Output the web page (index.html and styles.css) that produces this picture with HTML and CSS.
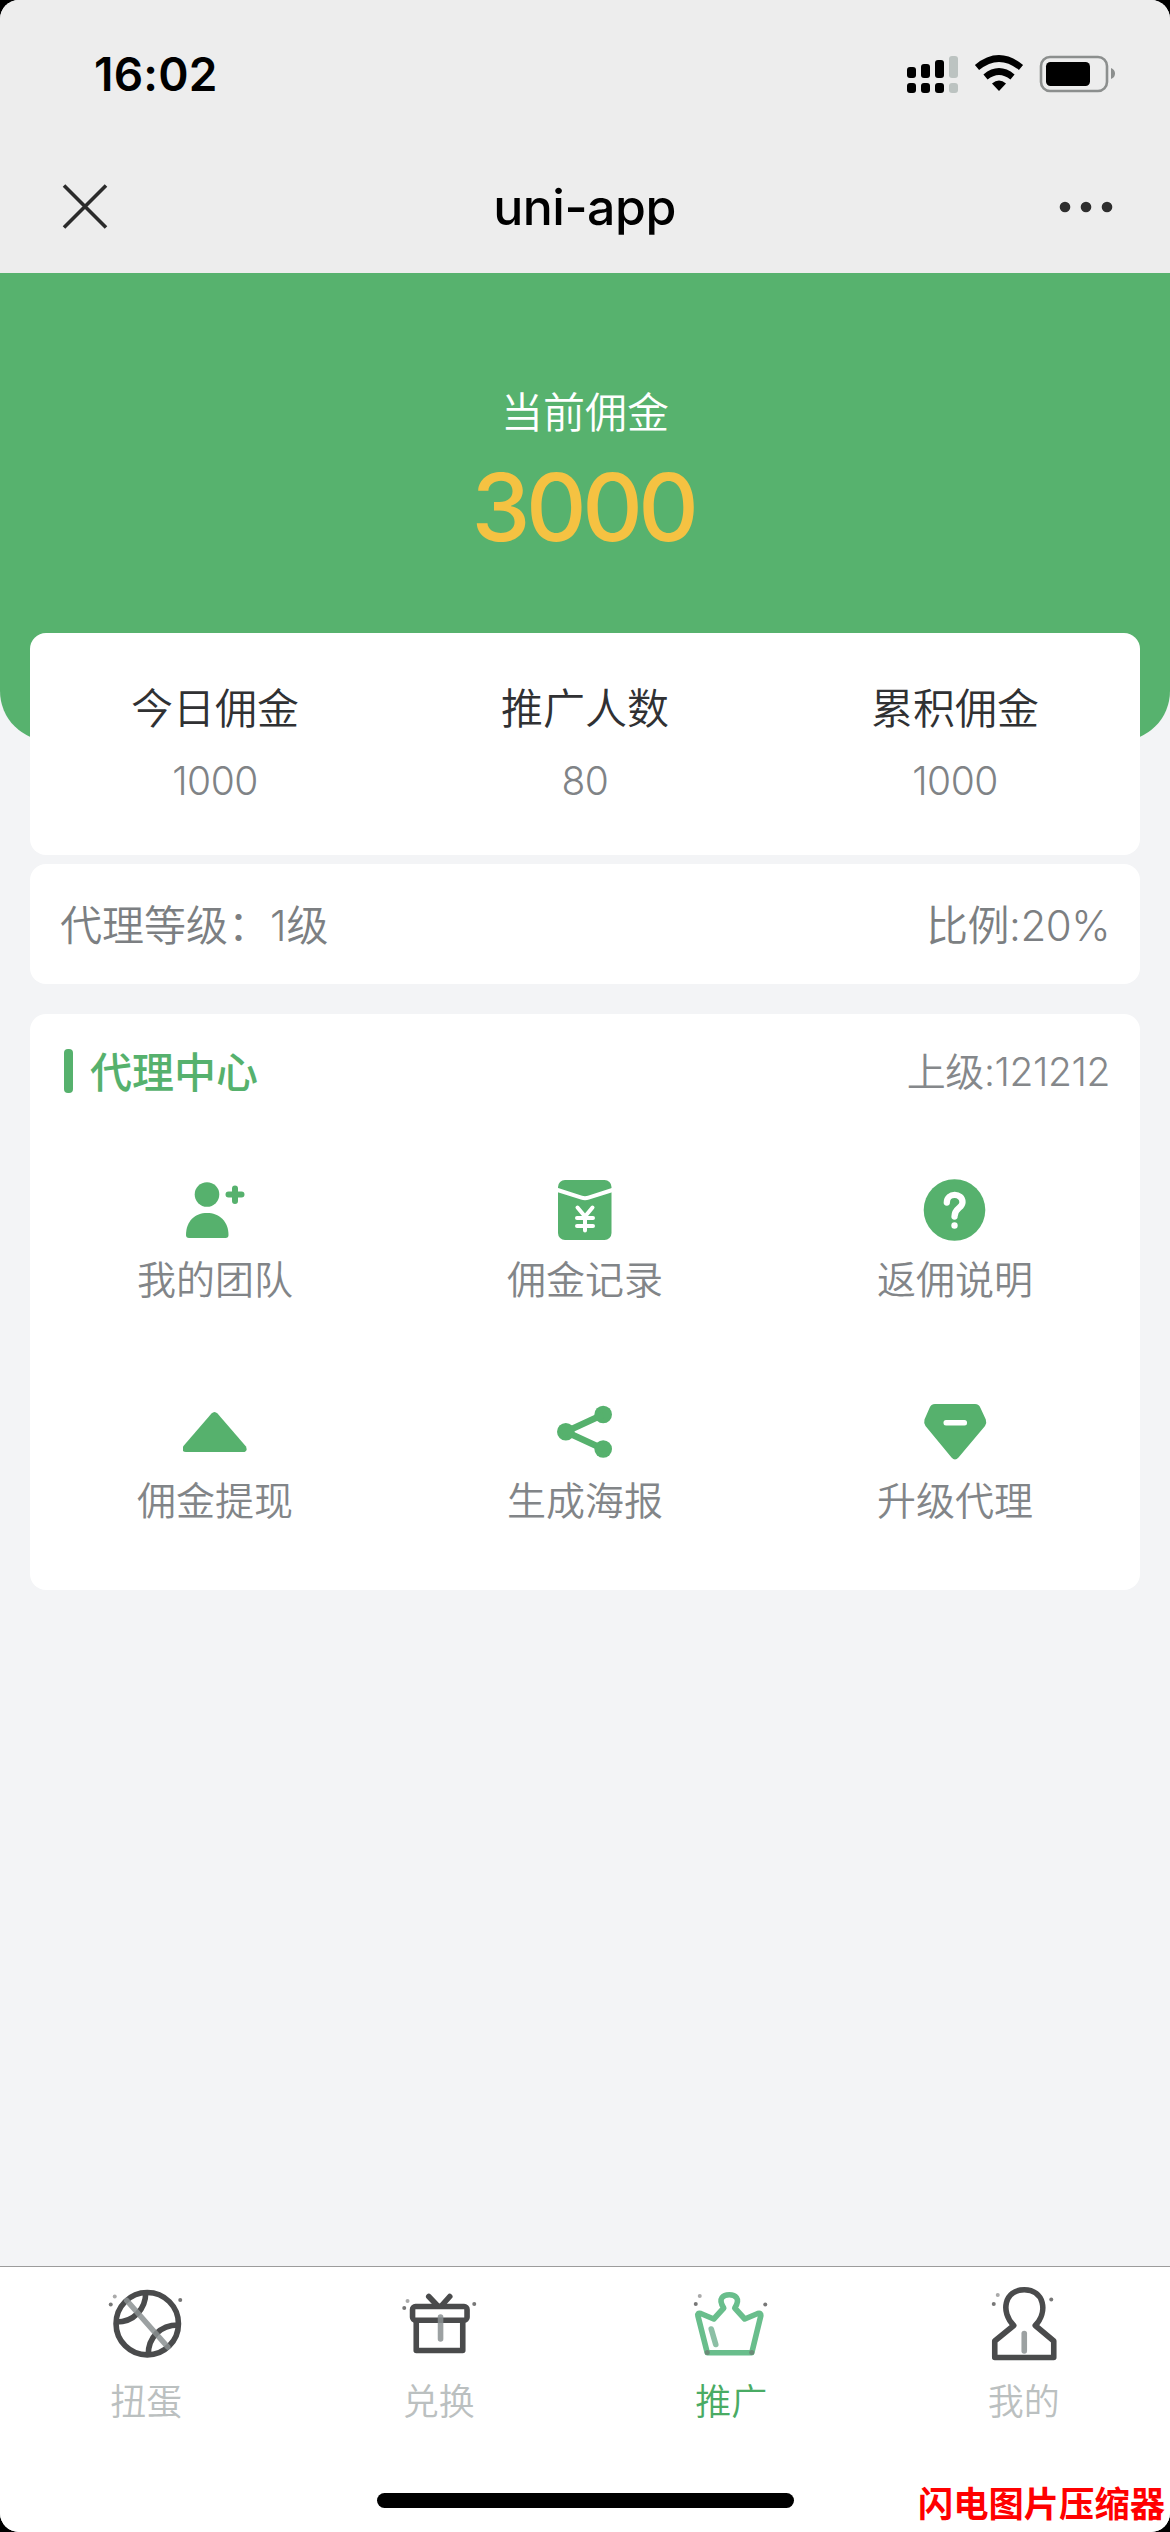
FILE: index.html
```html
<!DOCTYPE html>
<html lang="zh-CN">
<head>
<meta charset="utf-8">
<title>uni-app</title>
<link rel="stylesheet" href="styles.css">
</head>
<body>
<div class="screen">
  <header class="topbar">
    <div class="status">
      <span class="clock">16:02</span>
      <svg class="status-icons" viewBox="905 50 212 48">
        <g fill="#000">
          <rect x="907" y="67" width="9" height="11" rx="3"/><rect x="921" y="64" width="9" height="14" rx="3"/><rect x="935" y="60" width="9" height="18" rx="3"/>
          <rect x="907" y="83" width="9" height="10" rx="3"/><rect x="921" y="83" width="9" height="10" rx="3"/><rect x="935" y="83" width="9" height="10" rx="3"/>
        </g>
        <g fill="#bcc3c1"><rect x="949" y="56" width="9" height="22" rx="3"/><rect x="949" y="83" width="9" height="10" rx="3"/></g>
        <g fill="none" stroke="#000" stroke-width="6.6">
          <path d="M977 67.5Q999 49.500 1021 67.500"/>
          <path d="M985.500 77Q999 66 1012.500 77"/>
        </g>
        <path d="M992 83.500Q999 77.500 1006 83.500L999 91Z" fill="#000"/>
        <rect x="1041" y="57" width="66" height="34" rx="9" fill="none" stroke="#8c8f8e" stroke-width="2.600"/>
        <rect x="1046" y="62" width="44" height="24" rx="4.500"/>
        <path d="M1111 68Q1115 69.500 1115 73.500T1111 79Z" fill="#8c8f8e"/>
      </svg>
    </div>
    <div class="nav">
      <svg class="nav-icon" viewBox="62 183 46 48"><path d="M64 185.500L106 227.500M106 185.500L64 227.500" stroke="#2b2b2b" stroke-width="3.600" fill="none"/></svg>
      <h1 class="nav-title">uni-app</h1>
      <svg class="nav-more" viewBox="1059 195 54 24" fill="#2e2e2e"><circle cx="1065" cy="207" r="5.300"/><circle cx="1086" cy="207" r="5.300"/><circle cx="1107" cy="207" r="5.300"/></svg>
    </div>
  </header>

  <section class="hero">
    <div class="hero-label">当前佣金</div>
    <div class="hero-value">3000</div>
  </section>

  <main class="content">
    <section class="card stats">
      <div class="stat"><div class="stat-label">今日佣金</div><div class="stat-value">1000</div></div>
      <div class="stat"><div class="stat-label">推广人数</div><div class="stat-value">80</div></div>
      <div class="stat"><div class="stat-label">累积佣金</div><div class="stat-value">1000</div></div>
    </section>

    <section class="card level"><span>代理等级：1级</span><span class="ratio">比例:20%</span></section>

    <section class="card center">
      <div class="center-head">
        <h2 class="center-title"><span>代理中心</span></h2>
        <span class="parent">上级:121212</span>
      </div>
      <div class="grid">
        <div class="item">
          <svg class="icon" viewBox="183 1178 64 64"><circle cx="207" cy="1194.500" r="12.300"/><path d="M186 1235C186 1221 195 1213 207 1213S228.500 1221 228.500 1235Q228.500 1238 225.500 1238H189Q186 1238 186 1235Z"/><path class="stroke-plus" d="M228.500 1194.500H241.500M235 1188.500V1201"/></svg>
          <span>我的团队</span>
        </div>
        <div class="item">
          <svg class="icon" viewBox="553 1178 64 64"><rect x="558" y="1180" width="53.500" height="60" rx="7"/><path class="cut" d="M556 1189.500L581.500 1197.600Q585 1198.700 588.500 1197.600L614 1189.500"/><path class="cut round" d="M577.500 1207.500L585 1216.500L592.500 1207.500M585 1216V1230.500M577 1218H593M577 1226H593"/></svg>
          <span>佣金记录</span>
        </div>
        <div class="item">
          <svg class="icon" viewBox="923 1178 64 64"><circle cx="954.500" cy="1210" r="30.800"/><path class="cut round thick" d="M946.800 1202.500C946.800 1192.500 962.500 1192.500 962.500 1202.200C962.500 1208.500 954.500 1207.500 954.500 1216.500"/><circle cx="954.500" cy="1225.500" r="3.200" fill="#fff"/></svg>
          <span>返佣说明</span>
        </div>
        <div class="item">
          <svg class="icon" viewBox="183 1399 64 64"><path d="M211.500 1413.500Q214.500 1410.500 217.500 1413.500L246 1446.500Q248 1452 243 1452H186Q181 1452 183 1446.500Z"/></svg>
          <span>佣金提现</span>
        </div>
        <div class="item">
          <svg class="icon" viewBox="553 1399 64 64"><circle cx="565.800" cy="1431.700" r="8.800"/><circle cx="603.200" cy="1414.500" r="8.800"/><circle cx="603.200" cy="1449" r="8.800"/><path d="M603.200 1414.500L565.800 1431.700L603.200 1449" fill="none" stroke="#56b16d" stroke-width="6.500"/></svg>
          <span>生成海报</span>
        </div>
        <div class="item">
          <svg class="icon" viewBox="923 1399 64 64"><path d="M935 1404H975Q979 1404 980.500 1408L985.800 1419.500Q987 1422.500 985 1426L958.500 1457.500Q955 1461.500 951.500 1457.500L925.500 1426Q923.500 1422.500 924.500 1419.500L929.500 1408Q931 1404 935 1404Z"/><rect x="943.500" y="1420" width="23.500" height="5.500" rx="2.500" fill="#fff"/></svg>
          <span>升级代理</span>
        </div>
      </div>
    </section>
  </main>

  <nav class="tabbar">
    <div class="tab">
      <svg class="tab-icon" viewBox="106.250 2282 80 80">
        <g class="line"><circle cx="147.500" cy="2323.700" r="31.200"/><path d="M146 2292.500C146 2309 134 2322 116.500 2322"/><path d="M178.500 2325C160 2325 148.500 2338 148.500 2354.500"/></g>
        <path class="accent" d="M127 2300.500L168 2347"/>
        <circle class="dot" cx="111" cy="2304.500" r="2"/><circle class="dot pale" cx="115" cy="2296.500" r="2"/><circle class="dot" cx="180.500" cy="2300" r="2"/>
      </svg>
      <span>扭蛋</span>
    </div>
    <div class="tab">
      <svg class="tab-icon" viewBox="398.750 2282 80 80">
        <g class="line"><rect x="412.300" y="2306.500" width="54.500" height="13.700" rx="3"/><path d="M416 2320.500V2350.500H462.500V2320.500"/><path d="M428.500 2296.500L437.500 2306M449.500 2296.500L441 2306" stroke-linecap="round"/></g>
        <path class="accent" d="M440.300 2317V2339"/>
        <circle class="dot" cx="404" cy="2308" r="2"/><circle class="dot pale" cx="407.300" cy="2301" r="2"/><circle class="dot" cx="474" cy="2304" r="2"/>
      </svg>
      <span>兑换</span>
    </div>
    <div class="tab active">
      <svg class="tab-icon" viewBox="691.250 2282 80 80">
        <path class="line" d="M707.500 2352.800L698.200 2316Q697.500 2312.500 701 2313.500L714 2319L724 2308C717.500 2298 724 2294.800 729.500 2294.800S741.500 2298 735 2308L745 2319L758 2313.500Q761.500 2312.500 761 2316L752 2352.800Z"/>
        <path class="accent" d="M711.500 2329L716 2344.500"/>
        <circle cx="707.500" cy="2352.500" r="2.500" fill="#6b8c78"/><circle cx="752" cy="2352.500" r="2.500" fill="#6b8c78"/>
        <circle class="dot" cx="696" cy="2304" r="2"/><circle class="dot pale" cx="700" cy="2296" r="2"/><circle class="dot" cx="765.500" cy="2304.500" r="2"/>
      </svg>
      <span>推广</span>
    </div>
    <div class="tab">
      <svg class="tab-icon" viewBox="983.750 2282 80 80">
        <path class="line" d="M1013.500 2325.500C1000 2312 1004 2289.800 1024 2289.800S1048 2312 1035 2325.500L1053.500 2341V2357.500H994.500V2341Z"/>
        <path class="accent" d="M1024 2333.500V2351"/>
        <circle class="dot" cx="993.500" cy="2304" r="2"/><circle class="dot pale" cx="997.500" cy="2295" r="2"/><circle class="dot" cx="1051" cy="2299.500" r="2"/>
      </svg>
      <span>我的</span>
    </div>
  </nav>
  <div class="home-indicator"></div>
  <div class="watermark">闪电图片压缩器</div>
</div>
</body>
</html>
```
FILE: styles.css
```css
* { box-sizing: border-box; margin: 0; padding: 0; }
body {
  background: #000;
  font-family: Inter, "Noto Sans CJK SC", sans-serif;
  font-weight: 350;
}
svg { display: block; }
.screen {
  position: relative;
  display: flex;
  flex-direction: column;
  width: 1170px;
  height: 2532px;
  overflow: hidden;
  border-radius: 19px;
  background: #f3f4f6;
}
.topbar { height: 273px; background: #ededed; }
.status {
  display: flex;
  justify-content: space-between;
  align-items: center;
  height: 148px;
  padding: 0 53px 0 94px;
}
.clock { font-size: 46px; font-weight: 600; line-height: 60px; letter-spacing: 0.2px; }
.status-icons { width: 212px; height: 48px; }
.nav {
  display: grid;
  grid-template-columns: 1fr auto 1fr;
  align-items: center;
  height: 118px;
  padding: 0 57px 0 62px;
}
.nav-icon { width: 46px; height: 48px; }
.nav-title { margin-left: -6px; font-size: 50px; font-weight: 500; line-height: 60px; letter-spacing: -0.5px; }
.nav-more { width: 54px; height: 24px; justify-self: end; }

.hero {
  height: 468px;
  flex: none;
  padding-top: 113px;
  border-radius: 0 0 50px 50px;
  background: #57b26e;
  text-align: center;
}
.hero-label { font-size: 42px; line-height: 54px; color: #fff; }
.hero-value { margin-top: 17px; font-size: 94px; line-height: 100px; font-weight: 500; letter-spacing: -4.5px; text-indent: -4px; color: #f5c242; }

.content { flex: 1; margin-top: -108px; padding: 0 30px; }
.card { border-radius: 16px; background: #fff; }
.stats { display: flex; height: 222px; padding-top: 49px; }
.stat { flex: 1; text-align: center; }
.stat-label { font-size: 42px; line-height: 54px; color: #303133; }
.stat-value { margin-top: 20px; font-size: 39px; line-height: 50px; letter-spacing: -0.5px; color: #808386; }
.level {
  display: flex;
  justify-content: space-between;
  align-items: center;
  height: 120px;
  margin-top: 9px;
  padding: 0 30px 3px 30px;
  font-size: 42px;
  color: #7c7f82;
}
.ratio { letter-spacing: -0.5px; }
.center { height: 576px; margin-top: 30px; padding-top: 34px; }
.center-head { display: flex; justify-content: space-between; align-items: center; height: 46px; padding: 0 30px 0 34px; }
.center-title { display: flex; align-items: center; font-size: 42px; line-height: 46px; font-weight: 500; color: #56b16d; }
.center-title span { padding-top: 3px; }
.center-title::before { content: ""; width: 9px; height: 44px; margin-right: 17px; border-radius: 4px; background: #56b16d; }
.parent { padding-top: 2px; font-size: 39px; line-height: 46px; letter-spacing: -0.4px; color: #85888b; }
.grid { display: grid; grid-template-columns: repeat(3, 1fr); grid-auto-rows: 221px; padding-top: 84px; }
.item { display: flex; flex-direction: column; align-items: center; gap: 17px; font-size: 39px; line-height: 42px; color: #828588; }
.icon { width: 64px; height: 64px; fill: #56b16d; }
.stroke-plus { stroke: #56b16d; stroke-width: 6; stroke-linecap: round; }
.cut { fill: none; stroke: #fff; stroke-width: 4; }
.round { stroke-linecap: round; stroke-linejoin: round; }
.thick { stroke-width: 6.3; }

.tabbar {
  display: flex;
  height: 266px;
  padding-top: 15px;
  border-top: 1px solid #9c9c9c;
  background: #fff;
}
.tab { flex: 1; display: flex; flex-direction: column; align-items: center; gap: 17px; font-size: 36px; line-height: 46px; color: #bbc0c0; }
.tab.active { color: #4aab64; }
.tab-icon { width: 80px; height: 80px; }
.line { fill: none; stroke: #4a4b4c; stroke-width: 5.6; stroke-linejoin: round; }
.active .line { stroke: #69be8c; }
.accent { fill: none; stroke: #8b9192; stroke-opacity: .85; stroke-width: 5.6; stroke-linecap: round; }
.active .accent { stroke: #78b495; }
.dot { fill: #777; }
.pale { fill: #aaa; }
.home-indicator { position: absolute; left: 377px; top: 2493px; width: 417px; height: 15px; border-radius: 8px; background: #000; }
.watermark { position: absolute; right: 5px; top: 2480px; font-size: 35.3px; line-height: 50px; font-weight: 700; white-space: nowrap; color: #f00; }
```
